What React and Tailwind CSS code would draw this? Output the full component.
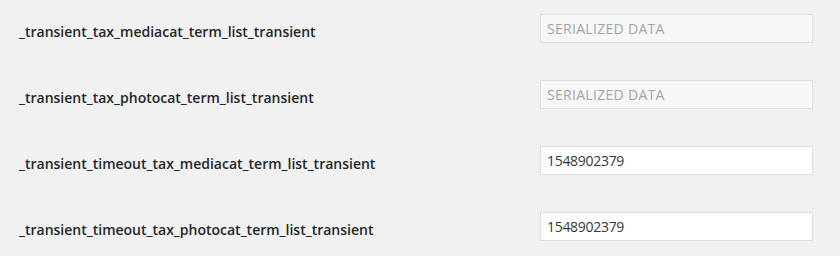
import React from "react"

const rows = [
  { name: "_transient_tax_mediacat_term_list_transient", value: "SERIALIZED DATA", locked: true },
  { name: "_transient_tax_photocat_term_list_transient", value: "SERIALIZED DATA", locked: true },
  { name: "_transient_timeout_tax_mediacat_term_list_transient", value: "1548902379", locked: false },
  { name: "_transient_timeout_tax_photocat_term_list_transient", value: "1548902379", locked: false },
]

const App = () => {
  return (
    <div className="w-[840px] h-[256px] bg-[#f1f1f1] overflow-hidden" style={{ fontFamily: '"Open Sans", "Noto Sans", sans-serif' }}>
      {rows.map((row) => (
        <div key={row.name} className="flex h-[66px]">
          <label className="w-[540px] pl-[19px] pt-[22px] text-[14px] leading-[20px] font-semibold text-[#23282d]">
            {row.name}
          </label>
          <div className="pt-[14px]">
            <input
              readOnly
              value={row.value}
              className={
                row.locked
                  ? "w-[273px] h-[29px] px-[6px] border border-[#dddddd] bg-[#f7f7f7] text-[#a0a5aa] text-[14px] tracking-[0.3px] outline-none"
                  : "w-[273px] h-[29px] px-[6px] border border-[#dddddd] bg-white text-[#32373c] text-[14px] tracking-[-0.3px] outline-none"
              }
            />
          </div>
        </div>
      ))}
    </div>
  )
}

export default App
